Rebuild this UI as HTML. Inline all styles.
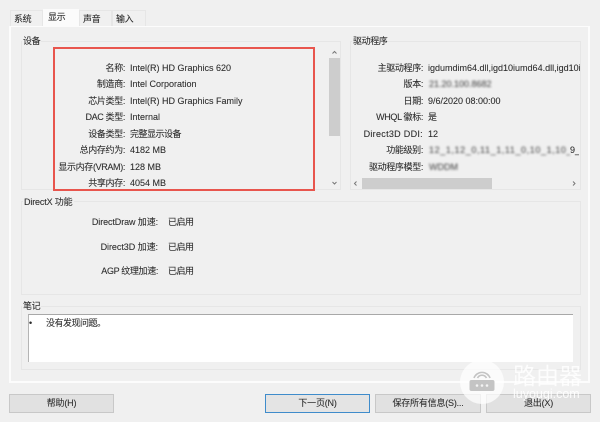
<!DOCTYPE html>
<html><head><meta charset="utf-8">
<style>
html,body{margin:0;padding:0;background:#f0f0f0}
#p{position:relative;width:600px;height:422px;overflow:hidden;background:#f0f0f0;font:9px/12px "Liberation Sans","Noto Sans CJK SC",sans-serif;color:#2a2a2a;-webkit-text-stroke:.1px #444}
#c{position:absolute;left:0;top:0;width:600px;height:422px;filter:blur(.35px)}
#c div{position:absolute;box-sizing:border-box}
.t{white-space:nowrap;height:12px}
.r{text-align:right;letter-spacing:-.35px}
.z{letter-spacing:-.5px}
.g{border:1px solid #e6e6e6}
.lg{background:#f0f0f0;padding:0 1px;letter-spacing:-.4px}
.tab{top:10px;height:16px;border:1px solid #e6e6e6;border-bottom:0;background:#f0f0f0;line-height:17px;padding-left:3px;letter-spacing:-.4px}
.btn{top:394px;height:19px;background:#e1e1e1;border:1px solid #c8c8c8;text-align:center;line-height:17px;letter-spacing:-.2px}
.sb{background:#f0f0f0}
.th{background:#cdcdcd}
.b{filter:blur(1.1px);color:#555}
</style></head><body><div id="p"><div id="c">
<div style="left:9px;top:26px;width:581px;height:357px;background:#f0f0f0;border:2px solid #fcfcfc;border-top-width:1px"></div>
<div class="tab" style="left:10px;width:33px">系统</div>
<div class="tab" style="left:43px;top:9px;width:36px;height:18px;background:#fbfbfb;border:0;padding-left:5px;line-height:17px">显示</div>
<div class="tab" style="left:79px;width:33px">声音</div>
<div class="tab" style="left:112px;width:34px">输入</div>

<div class="g" style="left:21px;top:41px;width:320px;height:149px"></div>
<div class="g" style="left:350px;top:41px;width:231px;height:149px"></div>
<div class="g" style="left:21px;top:201px;width:560px;height:94px"></div>
<div class="g" style="left:21px;top:306px;width:560px;height:64px"></div>
<div class="t lg" style="left:22px;top:35px">设备</div>
<div class="t lg" style="left:352px;top:35px">驱动程序</div>
<div class="t lg" style="left:23px;top:196px;letter-spacing:-.15px">DirectX 功能</div>
<div class="t lg" style="left:22px;top:300px">笔记</div>

<div class="sb" style="left:329px;top:46px;width:11px;height:143px"></div>
<div class="th" style="left:329px;top:58px;width:11px;height:78px"></div>
<svg style="position:absolute;left:329px;top:46px" width="11" height="143" viewBox="0 0 11 143"><path d="M3.500 7.500 5.500 5.500 7.500 7.500M3.500 136 5.500 138 7.500 136" fill="none" stroke="#777" stroke-width="1"/></svg>

<div class="t r" style="left:40px;width:85px;top:62px">名称:</div><div class="t" style="left:130px;top:62px">Intel(R) HD Graphics 620</div>
<div class="t r" style="left:40px;width:85px;top:78px">制造商:</div><div class="t" style="left:130px;top:78px">Intel Corporation</div>
<div class="t r" style="left:40px;width:85px;top:95px">芯片类型:</div><div class="t" style="left:130px;top:95px">Intel(R) HD Graphics Family</div>
<div class="t r" style="left:40px;width:85px;top:111px">DAC 类型:</div><div class="t" style="left:130px;top:111px">Internal</div>
<div class="t r" style="left:40px;width:85px;top:128px">设备类型:</div><div class="t z" style="left:130px;top:128px">完整显示设备</div>
<div class="t r" style="left:40px;width:85px;top:144px">总内存约为:</div><div class="t" style="left:130px;top:144px">4182 MB</div>
<div class="t r" style="left:40px;width:85px;top:161px">显示内存(VRAM):</div><div class="t" style="left:130px;top:161px">128 MB</div>
<div class="t r" style="left:40px;width:85px;top:177px">共享内存:</div><div class="t" style="left:130px;top:177px">4054 MB</div>

<div class="t r" style="left:350px;width:73px;top:62px">主驱动程序:</div><div style="left:428px;top:62px;width:152px;height:12px;overflow:hidden;white-space:nowrap">igdumdim64.dll,igd10iumd64.dll,igd10iumd64.dll</div>
<div class="t r" style="left:350px;width:73px;top:78px">版本:</div><div class="t b" style="left:429px;top:78px">21.20.100.8682</div>
<div class="t r" style="left:350px;width:73px;top:95px">日期:</div><div class="t" style="left:428px;top:95px">9/6/2020 08:00:00</div>
<div class="t r" style="left:350px;width:73px;top:111px">WHQL 徽标:</div><div class="t" style="left:428px;top:111px">是</div>
<div class="t r" style="left:350px;width:73px;top:128px;letter-spacing:.3px">Direct3D DDI:</div><div class="t" style="left:428px;top:128px">12</div>
<div class="t r" style="left:350px;width:73px;top:144px">功能级别:</div><div class="t b" style="left:429px;top:144px;width:141px;overflow:hidden;letter-spacing:.6px">12_1,12_0,11_1,11_0,10_1,10_0</div><div class="t" style="left:570px;top:144px;width:9px;overflow:hidden">9_3</div>
<div class="t r" style="left:350px;width:73px;top:161px">驱动程序模型:</div><div class="t b" style="left:429px;top:161px">WDDM</div>

<div class="sb" style="left:351px;top:178px;width:229px;height:11px"></div>
<div class="th" style="left:362px;top:178px;width:130px;height:11px"></div>
<svg style="position:absolute;left:351px;top:178px" width="229" height="11" viewBox="0 0 229 11"><path d="M5.500 3.500 3.500 5.500 5.500 7.500M222 3.500 224 5.500 222 7.500" fill="none" stroke="#777" stroke-width="1"/></svg>

<div class="t r" style="left:40px;width:118px;top:216px;letter-spacing:-.1px">DirectDraw 加速:</div><div class="t z" style="left:168px;top:216px">已启用</div>
<div class="t r" style="left:40px;width:118px;top:241px;letter-spacing:-.05px">Direct3D 加速:</div><div class="t z" style="left:168px;top:241px">已启用</div>
<div class="t r" style="left:40px;width:118px;top:265px">AGP 纹理加速:</div><div class="t z" style="left:168px;top:265px">已启用</div>

<div style="left:28px;top:314px;width:545px;height:48px;background:#fff;border-top:1px solid #a8a8a8;border-left:1px solid #b4b4b4"></div>
<div class="t" style="left:29px;top:317px">•</div>
<div class="t z" style="left:46px;top:317px">没有发现问题。</div>

<div class="btn" style="left:9px;width:105px">帮助(H)</div>
<div class="btn" style="left:265px;width:105px;border-color:#3f8ccb;background:#e4e4e4">下一页(N)</div>
<div class="btn" style="left:375px;width:106px">保存所有信息(S)...</div>
<div class="btn" style="left:486px;width:105px">退出(X)</div>

<div style="left:460px;top:360px;width:44px;height:44px;border-radius:50%;background:rgba(255,255,255,.72)"></div>
<svg style="position:absolute;left:460px;top:360px" width="44" height="44" viewBox="0 0 44 44">
<path d="M14 18a8.500 8.500 0 0 1 16 0M17.500 18a5 5 0 0 1 9 0" fill="none" stroke="#c4c4c4" stroke-width="1.600"/>
<rect x="9.500" y="20" width="25" height="11" rx="2" fill="#c4c4c4"/>
<circle cx="17" cy="25.500" r="1.300" fill="#f4f4f4"/><circle cx="22" cy="25.500" r="1.300" fill="#f4f4f4"/><circle cx="27" cy="25.500" r="1.300" fill="#f4f4f4"/>
</svg>
<div class="t" style="left:513px;top:360px;height:28px;font-size:23px;line-height:28px;color:rgba(255,255,255,.82);font-family:'Noto Sans CJK SC',sans-serif;-webkit-text-stroke:0">路由器</div>
<div class="t" style="left:513px;top:387px;height:14px;font-size:12.500px;line-height:14px;color:rgba(255,255,255,.88);-webkit-text-stroke:0">luyouqi.com</div>

<div style="left:53px;top:47px;width:262px;height:144px;border:2px solid #e8554d"></div>
</div></div></body></html>
